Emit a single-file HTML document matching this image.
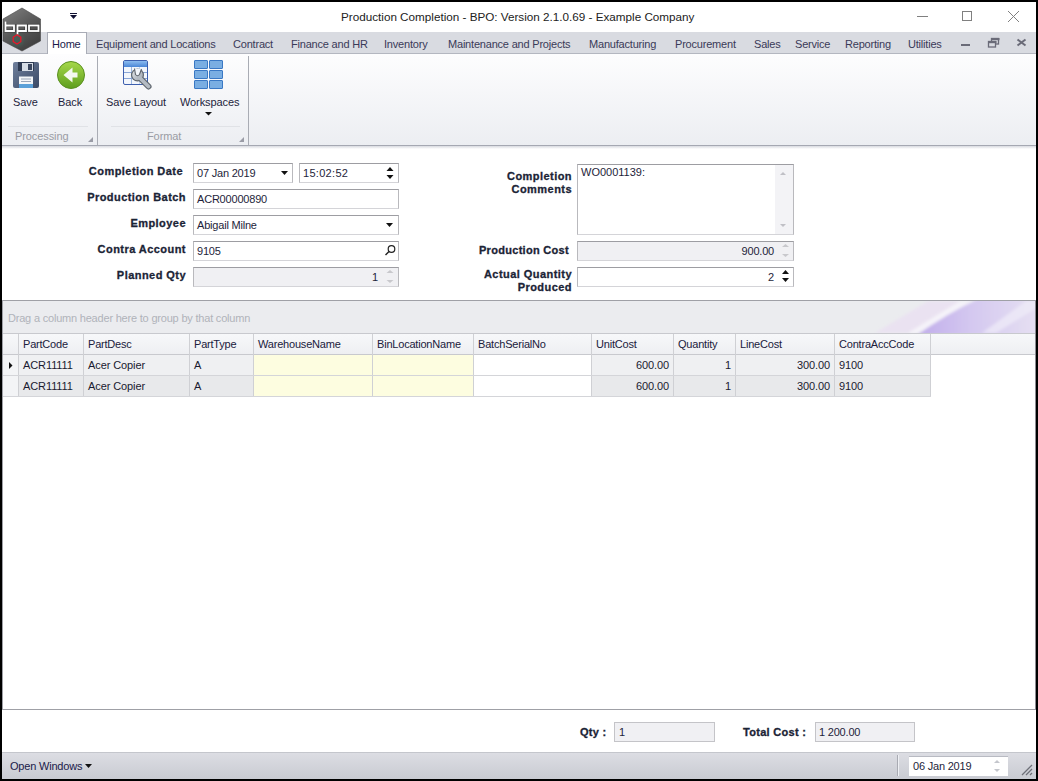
<!DOCTYPE html>
<html><head><meta charset="utf-8">
<style>
*{margin:0;padding:0;box-sizing:border-box}
html,body{width:1038px;height:781px;overflow:hidden;background:#000}
body{position:relative;font-family:"Liberation Sans",sans-serif;font-size:11px;color:#1e1e3c}
.a{position:absolute}
.t{position:absolute;white-space:nowrap;line-height:13px}
#win{left:2px;top:2px;width:1034px;height:777px;background:#fff}
#title{left:341px;top:10px;font-size:11.7px;color:#222;line-height:14px}
#tabstrip{left:2px;top:32px;width:1034px;height:22px;background:#d9dbe1;border-bottom:1px solid #b4b7c0}
.tab{position:absolute;top:38px;font-size:11px;color:#3a3a58;letter-spacing:-0.2px}
#hometab{left:47px;top:32px;width:40px;height:23px;background:#fff;border:1px solid #a9acb6;border-bottom:none}
#ribbon{left:2px;top:54px;width:1034px;height:91px;background:linear-gradient(#fdfdfe,#eceef2)}
#ribbonbot{left:2px;top:145px;width:1034px;height:1px;background:#a5a8b2}
#ribbonshadow{left:2px;top:146px;width:1034px;height:3px;background:linear-gradient(#d8dae0,#fff)}
.rl{position:absolute;top:96px;font-size:11px;color:#1e1e3c;letter-spacing:-0.1px}
.gl{position:absolute;top:130px;font-size:11px;color:#9a9ca4;letter-spacing:-0.1px}
.vsep{position:absolute;top:56px;width:1px;height:89px;background:#a9acb4}
.hsep{position:absolute;top:126px;height:1px;background:#e0e2e6}
</style></head><body>
<div class="a" id="win"></div>
<div class="t" id="title">Production Completion - BPO: Version 2.1.0.69 - Example Company</div>
<div class="a" id="tabstrip"></div>
<div class="a" id="hometab"></div>
<div class="tab" style="left:52px;top:38px;color:#1a1a4a">Home</div>
<div class="tab" style="left:96px;top:38px">Equipment and Locations</div>
<div class="tab" style="left:233px;top:38px">Contract</div>
<div class="tab" style="left:291px;top:38px">Finance and HR</div>
<div class="tab" style="left:384px;top:38px">Inventory</div>
<div class="tab" style="left:448px;top:38px">Maintenance and Projects</div>
<div class="tab" style="left:589px;top:38px">Manufacturing</div>
<div class="tab" style="left:675px;top:38px">Procurement</div>
<div class="tab" style="left:754px;top:38px">Sales</div>
<div class="tab" style="left:795px;top:38px">Service</div>
<div class="tab" style="left:845px;top:38px">Reporting</div>
<div class="tab" style="left:908px;top:38px">Utilities</div>
<div class="a" id="ribbon"></div>
<div class="a" id="ribbonbot"></div>
<div class="a" id="ribbonshadow"></div>

<!-- title bar controls -->
<svg class="a" style="left:0;top:0" width="1038" height="60">
  <line x1="917" y1="16.5" x2="928" y2="16.5" stroke="#808080" stroke-width="1"/>
  <rect x="962.5" y="11.5" width="9" height="9" fill="none" stroke="#808080" stroke-width="1"/>
  <line x1="1008" y1="11" x2="1019" y2="22" stroke="#808080" stroke-width="1"/>
  <line x1="1019" y1="11" x2="1008" y2="22" stroke="#808080" stroke-width="1"/>
  <!-- quick access -->
  <rect x="70" y="13" width="7" height="1" fill="#111133"/>
  <polygon points="70,15 77,15 73.5,19" fill="#111133"/>
  <!-- MDI buttons -->
  <rect x="961" y="44" width="9" height="2" fill="#6a6b78"/>
  <rect x="991.5" y="38.5" width="7" height="5.5" fill="none" stroke="#6a6b78" stroke-width="1.3"/>
  <rect x="991" y="38" width="8.5" height="2.2" fill="#6a6b78"/>
  <rect x="988.5" y="41.5" width="7" height="5.5" fill="#d9dbe1" stroke="#6a6b78" stroke-width="1.3"/>
  <rect x="988" y="41" width="8.5" height="2.2" fill="#6a6b78"/>
  <line x1="1017.5" y1="39.5" x2="1025.5" y2="45.5" stroke="#6a6b78" stroke-width="2"/>
  <line x1="1025.5" y1="39.5" x2="1017.5" y2="45.5" stroke="#6a6b78" stroke-width="2"/>
</svg>
<!-- logo -->
<svg class="a" style="left:0;top:0" width="48" height="56">
  <defs>
    <linearGradient id="hexg" x1="0.2" y1="0" x2="0.8" y2="1">
      <stop offset="0" stop-color="#7c7c7c"/><stop offset="0.45" stop-color="#5a5a5a"/><stop offset="1" stop-color="#3c3c3c"/>
    </linearGradient>
    <filter id="lb2"><feGaussianBlur stdDeviation="1.2"/></filter>
  </defs>
  <polygon points="22,8 40.5,19 40.5,41 22,51 3,41 3,19" fill="url(#hexg)" stroke="#444" stroke-width="0.6"/>
  <circle cx="17" cy="40" r="7" fill="#3f6a5c" opacity="0.45" filter="url(#lb2)"/>
  <g fill="none" stroke="#2a2a2a" stroke-width="3.2" opacity="0.6">
    <path d="M5.5,21.5 V31 H14 V25.5 H5.5"/>
    <path d="M17.5,34 V25.5 H26 V31 H17.5"/>
    <rect x="29" y="25.5" width="9.5" height="5.5"/>
  </g>
  <g fill="none" stroke="#fff" stroke-width="1.8">
    <path d="M5.5,21.5 V31 H14 V25.5 H5.5"/>
    <path d="M17.5,34.5 V25.5 H26 V31 H17.5"/>
    <rect x="29" y="25.5" width="9.5" height="5.5"/>
  </g>
  <polygon points="17,34.8 20.8,37.2 20.8,41.6 17,44 13.2,41.6 13.2,37.2" fill="none" stroke="#e8182a" stroke-width="1.3"/>
</svg>
<!-- ribbon group separators -->
<div class="vsep" style="left:97px"></div>
<div class="vsep" style="left:248px"></div>
<div class="hsep" style="left:8px;width:80px"></div>
<div class="hsep" style="left:111px;width:129px"></div>
<!-- Save icon -->
<svg class="a" style="left:0;top:50px" width="260" height="100">
  <defs>
    <linearGradient id="flop" x1="0" y1="0" x2="1" y2="1">
      <stop offset="0" stop-color="#6f7f9c"/><stop offset="1" stop-color="#3b4a66"/>
    </linearGradient>
    <linearGradient id="grn" x1="0" y1="0" x2="0" y2="1">
      <stop offset="0" stop-color="#a6d84a"/><stop offset="1" stop-color="#5e9e1e"/>
    </linearGradient>
  </defs>
  <rect x="13" y="12" width="26" height="26" rx="2" fill="url(#flop)"/>
  <rect x="18" y="12" width="16" height="9" fill="#2e3a52"/>
  <rect x="22" y="13" width="11" height="8" fill="#d7dde6"/>
  <rect x="28" y="14" width="4" height="6" fill="#3a465e"/>
  <rect x="19" y="26.5" width="14" height="11.5" fill="#f4f6f8"/>
  <rect x="19" y="34" width="14" height="4" fill="#5aa0d8"/>
  <rect x="21" y="28.5" width="10" height="1" fill="#9aa6b8"/>
  <rect x="21" y="31" width="10" height="1" fill="#9aa6b8"/>
  <!-- Back icon -->
  <circle cx="71" cy="25" r="13.5" fill="url(#grn)" stroke="#5a9020" stroke-width="1"/>
  <polygon points="63.5,25 72.5,17.5 72.5,22.5 77.5,22.5 77.5,27.5 72.5,27.5 72.5,32.5" fill="#f4f8f0"/>
  <!-- Save Layout icon -->
  <defs>
    <linearGradient id="tblh" x1="0" y1="0" x2="0" y2="1"><stop offset="0" stop-color="#8cbcf0"/><stop offset="1" stop-color="#4a86d6"/></linearGradient>
    <linearGradient id="wr" x1="0" y1="0" x2="1" y2="1"><stop offset="0" stop-color="#e6eaee"/><stop offset="1" stop-color="#98a0aa"/></linearGradient>
  </defs>
  <rect x="123.5" y="10.5" width="24" height="24" rx="1.5" fill="#f2f6fc" stroke="#3d5fae" stroke-width="1"/>
  <rect x="124" y="11" width="23" height="6" fill="url(#tblh)"/>
  <line x1="131.5" y1="17" x2="131.5" y2="34" stroke="#9cb6de" stroke-width="1"/>
  <line x1="139.5" y1="17" x2="139.5" y2="34" stroke="#c4d4ec" stroke-width="1"/>
  <line x1="124" y1="22.5" x2="147" y2="22.5" stroke="#8aa6d6" stroke-width="1"/>
  <line x1="124" y1="28.5" x2="147" y2="28.5" stroke="#8aa6d6" stroke-width="1"/>
  <g fill="#5d646c">
    <circle cx="137.5" cy="25" r="6.5"/>
    <line x1="139" y1="27" x2="148.5" y2="36.5" stroke="#5d646c" stroke-width="6" stroke-linecap="round"/>
  </g>
  <g fill="url(#wr)">
    <circle cx="137.5" cy="25" r="5.3"/>
    <line x1="139" y1="27" x2="148.5" y2="36.5" stroke="#b4bbc3" stroke-width="3.8" stroke-linecap="round"/>
  </g>
  <path d="M134.5,18.5 L135.5,24.5 Q137.5,27 139.5,24.5 L141.5,19" fill="#f2f6fc" stroke="#5d646c" stroke-width="1.1"/>
  <!-- Workspaces icon -->
  <g fill="#7aaee2" stroke="#3a78c4" stroke-width="1">
    <rect x="194.5" y="10.5" width="13" height="8" rx="0.5"/>
    <rect x="209.5" y="10.5" width="13" height="8" rx="0.5"/>
    <rect x="194.5" y="20.5" width="13" height="8" rx="0.5"/>
    <rect x="209.5" y="20.5" width="13" height="8" rx="0.5"/>
    <rect x="194.5" y="30.5" width="13" height="8" rx="0.5"/>
    <rect x="209.5" y="30.5" width="13" height="8" rx="0.5"/>
  </g>
  <polygon points="205,62 212,62 208.5,65.5" fill="#111"/>
  <!-- dialog launchers -->
  <polygon points="93,87 93,92 88,92" fill="#9a9ca6"/>
  <polygon points="244,87 244,92 239,92" fill="#9a9ca6"/>
</svg>
<div class="rl" style="left:13px">Save</div>
<div class="rl" style="left:58px">Back</div>
<div class="rl" style="left:106px">Save Layout</div>
<div class="rl" style="left:180px">Workspaces</div>
<div class="gl" style="left:15px">Processing</div>
<div class="gl" style="left:147px">Format</div>



<style>
.lb{position:absolute;font-weight:bold;font-size:11px;color:#1b2436;letter-spacing:0.45px;-webkit-text-stroke:0.3px #1b2436;text-align:right;white-space:nowrap;line-height:13px}
.bx{position:absolute;height:20px;background:#fff;border:1px solid #b9b9bd;border-top-color:#9d9da2;border-bottom-color:#d4d4d8}
.bx.dis{background:#f0f0f3}
.vt{position:absolute;font-size:11px;color:#1e1e3a;letter-spacing:-0.2px;white-space:nowrap;line-height:13px}
.gh{position:absolute;font-size:11px;color:#20203c;letter-spacing:-0.2px;white-space:nowrap;line-height:13px}
.gc{position:absolute;font-size:11px;color:#1a1a30;letter-spacing:-0.1px;white-space:nowrap;line-height:13px}
</style>
<div class="lb" style="right:855px;top:165px">Completion Date</div>
<div class="lb" style="right:852px;top:191px">Production Batch</div>
<div class="lb" style="right:852px;top:217px">Employee</div>
<div class="lb" style="right:852px;top:243px">Contra Account</div>
<div class="lb" style="right:852px;top:269px">Planned Qty</div>
<div class="bx" style="left:193px;top:163px;width:100px"></div>
<div class="bx" style="left:299px;top:163px;width:100px"></div>
<div class="bx" style="left:193px;top:189px;width:206px"></div>
<div class="bx" style="left:193px;top:215px;width:206px"></div>
<div class="bx" style="left:193px;top:241px;width:206px"></div>
<div class="bx dis" style="left:193px;top:267px;width:206px"></div>
<div class="vt" style="left:197px;top:167px">07 Jan 2019</div>
<div class="vt" style="left:303px;top:167px;letter-spacing:0.3px">15:02:52</div>
<div class="vt" style="left:197px;top:193px">ACR00000890</div>
<div class="vt" style="left:197px;top:219px">Abigail Milne</div>
<div class="vt" style="left:197px;top:245px">9105</div>
<div class="vt" style="right:660px;top:271px">1</div>

<div class="lb" style="right:466px;top:170px;line-height:13px">Completion<br>Comments</div>
<div class="lb" style="right:469px;top:244px;letter-spacing:0.3px">Production Cost</div>
<div class="lb" style="right:466px;top:268px;line-height:13px">Actual Quantity<br>Produced</div>
<div class="bx" style="left:577px;top:164px;width:217px;height:71px"></div>
<div class="a" style="left:775px;top:165px;width:18px;height:69px;background:#f3f3f6"></div>
<div class="bx dis" style="left:577px;top:241px;width:217px"></div>
<div class="bx" style="left:577px;top:267px;width:217px"></div>
<div class="vt" style="left:581px;top:166px;letter-spacing:0">WO0001139:</div>
<div class="vt" style="right:264px;top:245px">900.00</div>
<div class="vt" style="right:264px;top:271px">2</div>
<svg class="a" style="left:0;top:150px" width="820" height="150">
  <polygon points="281,21 288,21 284.5,25" fill="#111"/>
  <polygon points="386.5,21 393.5,21 390,17" fill="#111"/>
  <polygon points="386.5,25 393.5,25 390,29" fill="#111"/>
  <polygon points="386,73 393,73 389.5,77" fill="#111"/>
  <circle cx="391.5" cy="99" r="3.3" fill="none" stroke="#222" stroke-width="1.2"/>
  <line x1="389" y1="101.5" x2="385.5" y2="105" stroke="#222" stroke-width="1.4"/>
  <polygon points="386.5,123 393.5,123 390,120" fill="#c8c8cc"/>
  <polygon points="386.5,130 393.5,130 390,133" fill="#c8c8cc"/>
  <polygon points="780,25 786,25 783,22" fill="#c0c0c6"/>
  <polygon points="780,74 786,74 783,77" fill="#c0c0c6"/>
  <polygon points="782,97 789,97 785.5,94" fill="#c8c8cc"/>
  <polygon points="782,104 789,104 785.5,107" fill="#c8c8cc"/>
  <polygon points="782,124 789,124 785.5,120" fill="#111"/>
  <polygon points="782,128 789,128 785.5,132" fill="#111"/>
</svg>

<div class="a" style="left:2px;top:300px;width:1034px;height:410px;border:1px solid #9fa0a6;border-right-color:#8c8c92;background:#fff"></div>
<div class="a" style="left:3px;top:301px;width:1032px;height:32px;background:#ebecef"></div>
<svg class="a" style="left:860px;top:301px" width="175" height="32">
  <defs>
    <filter id="bl"><feGaussianBlur stdDeviation="1.6"/></filter>
    <linearGradient id="pg" x1="0" y1="0.5" x2="1" y2="0.5">
      <stop offset="0" stop-color="#c0acea"/><stop offset="0.45" stop-color="#d4c8f0"/><stop offset="1" stop-color="#e6e0f2"/>
    </linearGradient>
  </defs>
  <g filter="url(#bl)">
    <polygon points="15,32 68,0 108,0 52,32" fill="#eadff2" opacity="0.75"/>
    <polygon points="48,32 100,0 116,0 58,32" fill="#f5f3f9"/>
    <path d="M57,34 Q88,12 118,-2 L178,-2 L178,34 Z" fill="url(#pg)"/>
    <polygon points="122,32 166,0 178,0 178,6 136,32" fill="#f0ecf8" opacity="0.7"/>
  </g>
</svg>
<div class="gh" style="left:8px;top:312px;color:#b0b3ba">Drag a column header here to group by that column</div>
<div class="a" style="left:3px;top:333px;width:1032px;height:22px;background:linear-gradient(#f7f8fa,#eeeff2);border-top:1px solid #c8c9ce;border-bottom:1px solid #c8c9ce"></div>
<div class="a" style="left:18px;top:334px;width:1px;height:62px;background:#cfd0d4"></div>
<div class="a" style="left:83px;top:334px;width:1px;height:62px;background:#cfd0d4"></div>
<div class="a" style="left:189px;top:334px;width:1px;height:62px;background:#cfd0d4"></div>
<div class="a" style="left:253px;top:334px;width:1px;height:62px;background:#cfd0d4"></div>
<div class="a" style="left:372px;top:334px;width:1px;height:62px;background:#cfd0d4"></div>
<div class="a" style="left:473px;top:334px;width:1px;height:62px;background:#cfd0d4"></div>
<div class="a" style="left:591px;top:334px;width:1px;height:62px;background:#cfd0d4"></div>
<div class="a" style="left:673px;top:334px;width:1px;height:62px;background:#cfd0d4"></div>
<div class="a" style="left:735px;top:334px;width:1px;height:62px;background:#cfd0d4"></div>
<div class="a" style="left:834px;top:334px;width:1px;height:62px;background:#cfd0d4"></div>
<div class="a" style="left:930px;top:334px;width:1px;height:62px;background:#cfd0d4"></div>
<div class="a" style="left:3px;top:355px;width:15px;height:20px;background:#f3f4f6"></div>
<div class="a" style="left:19px;top:355px;width:64px;height:20px;background:#eff0f2"></div>
<div class="a" style="left:84px;top:355px;width:105px;height:20px;background:#eff0f2"></div>
<div class="a" style="left:190px;top:355px;width:63px;height:20px;background:#eff0f2"></div>
<div class="a" style="left:254px;top:355px;width:118px;height:20px;background:#fdfde0"></div>
<div class="a" style="left:373px;top:355px;width:100px;height:20px;background:#fdfde0"></div>
<div class="a" style="left:474px;top:355px;width:117px;height:20px;background:#fff"></div>
<div class="a" style="left:592px;top:355px;width:81px;height:20px;background:#eff0f2"></div>
<div class="a" style="left:674px;top:355px;width:61px;height:20px;background:#eff0f2"></div>
<div class="a" style="left:736px;top:355px;width:98px;height:20px;background:#eff0f2"></div>
<div class="a" style="left:835px;top:355px;width:95px;height:20px;background:#eff0f2"></div>
<div class="a" style="left:3px;top:375px;width:928px;height:1px;background:#d4d5d9"></div>
<div class="a" style="left:3px;top:376px;width:15px;height:20px;background:#f3f4f6"></div>
<div class="a" style="left:19px;top:376px;width:64px;height:20px;background:#e8e9eb"></div>
<div class="a" style="left:84px;top:376px;width:105px;height:20px;background:#e8e9eb"></div>
<div class="a" style="left:190px;top:376px;width:63px;height:20px;background:#e8e9eb"></div>
<div class="a" style="left:254px;top:376px;width:118px;height:20px;background:#fdfde0"></div>
<div class="a" style="left:373px;top:376px;width:100px;height:20px;background:#fdfde0"></div>
<div class="a" style="left:474px;top:376px;width:117px;height:20px;background:#fff"></div>
<div class="a" style="left:592px;top:376px;width:81px;height:20px;background:#e8e9eb"></div>
<div class="a" style="left:674px;top:376px;width:61px;height:20px;background:#e8e9eb"></div>
<div class="a" style="left:736px;top:376px;width:98px;height:20px;background:#e8e9eb"></div>
<div class="a" style="left:835px;top:376px;width:95px;height:20px;background:#e8e9eb"></div>
<div class="a" style="left:3px;top:396px;width:928px;height:1px;background:#d4d5d9"></div>
<div class="gh" style="left:23px;top:338px">PartCode</div>
<div class="gh" style="left:88px;top:338px">PartDesc</div>
<div class="gh" style="left:194px;top:338px">PartType</div>
<div class="gh" style="left:258px;top:338px">WarehouseName</div>
<div class="gh" style="left:377px;top:338px">BinLocationName</div>
<div class="gh" style="left:478px;top:338px">BatchSerialNo</div>
<div class="gh" style="left:596px;top:338px">UnitCost</div>
<div class="gh" style="left:678px;top:338px">Quantity</div>
<div class="gh" style="left:740px;top:338px">LineCost</div>
<div class="gh" style="left:839px;top:338px">ContraAccCode</div>
<div class="gc" style="left:23px;top:359px">ACR11111</div>
<div class="gc" style="left:88px;top:359px">Acer Copier</div>
<div class="gc" style="left:194px;top:359px">A</div>
<div class="gc" style="right:369px;top:359px">600.00</div>
<div class="gc" style="right:307px;top:359px">1</div>
<div class="gc" style="right:208px;top:359px">300.00</div>
<div class="gc" style="left:839px;top:359px">9100</div>
<div class="gc" style="left:23px;top:380px">ACR11111</div>
<div class="gc" style="left:88px;top:380px">Acer Copier</div>
<div class="gc" style="left:194px;top:380px">A</div>
<div class="gc" style="right:369px;top:380px">600.00</div>
<div class="gc" style="right:307px;top:380px">1</div>
<div class="gc" style="right:208px;top:380px">300.00</div>
<div class="gc" style="left:839px;top:380px">9100</div>
<svg class="a" style="left:0;top:355px" width="20" height="20"><polygon points="9,7 9,14 12.5,10.5" fill="#111"/></svg>

<div class="lb" style="left:580px;top:726px;letter-spacing:0.3px">Qty :</div>
<div class="a" style="left:614px;top:722px;width:101px;height:20px;background:#f0f0f3;border:1px solid #c4c4c8"></div>
<div class="vt" style="left:619px;top:726px">1</div>
<div class="lb" style="left:743px;top:726px;letter-spacing:0.3px">Total Cost :</div>
<div class="a" style="left:815px;top:722px;width:100px;height:20px;background:#f0f0f3;border:1px solid #c4c4c8"></div>
<div class="vt" style="left:819px;top:726px">1 200.00</div>
<div class="a" style="left:2px;top:752px;width:1034px;height:27px;background:linear-gradient(#dcdde3,#c9cbd2);border-top:1px solid #c4c6cc"></div>
<div class="vt" style="left:10px;top:760px;color:#20204a">Open Windows</div>
<div class="a" style="left:909px;top:756px;width:99px;height:20px;background:#fff;border-top:1px solid #b8bac2"></div>
<div class="vt" style="left:913px;top:760px">06 Jan 2019</div>
<svg class="a" style="left:0;top:740px" width="1038" height="41">
  <polygon points="85,24 92,24 88.5,28" fill="#111"/>
  <line x1="897.5" y1="15" x2="897.5" y2="36" stroke="#a8aab2" stroke-width="1"/>
  <line x1="898.5" y1="15" x2="898.5" y2="36" stroke="#eef0f4" stroke-width="1"/>
  <polygon points="994,23 1000,23 997,20" fill="#c4c6cc"/>
  <polygon points="994,29 1000,29 997,32" fill="#c4c6cc"/>
  <g stroke="#6e7078" stroke-width="1.2">
    <line x1="1022" y1="35" x2="1032" y2="25"/>
    <line x1="1026" y1="35" x2="1032" y2="29"/>
    <line x1="1030" y1="35" x2="1032" y2="33"/>
  </g>
</svg>
</body></html>
